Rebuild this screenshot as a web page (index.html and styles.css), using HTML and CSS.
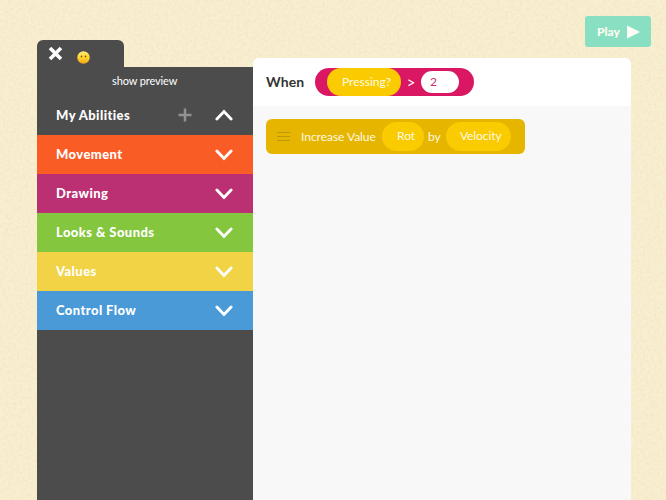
FILE: index.html
```html
<!DOCTYPE html>
<html lang="en">
<head>
<meta charset="utf-8">
<title>Ability editor</title>
<link rel="stylesheet" href="styles.css">
</head>
<body>
<svg class="paper" width="666" height="500" aria-hidden="true">
  <filter id="grain" x="0" y="0" width="100%" height="100%" color-interpolation-filters="sRGB">
    <feTurbulence type="fractalNoise" baseFrequency="0.35" numOctaves="2" seed="4"/>
    <feColorMatrix values="0 0 0 0 0.72  0 0 0 0 0.6  0 0 0 0 0.35  0.2 0 0 0 -0.085"/>
  </filter>
  <rect width="666" height="500" filter="url(#grain)"/>
</svg>
<button class="play"><span class="t-play">Play</span>
  <svg width="13" height="14" viewBox="0 0 13 14"><path d="M0 .5 13 7 0 13.5Z" fill="#fffdf3"/></svg>
</button>
<div class="editor">
  <aside class="sidebar">
    <div class="tab">
      <svg class="close" width="15" height="15" viewBox="0 0 15 15"><path d="M2 2 13 13M13 2 2 13" stroke="#fff" stroke-width="3.6"/></svg>
      <svg class="face" width="13" height="13" viewBox="0 0 13 13">
        <defs><linearGradient id="skin" x1="0" y1="0" x2="0" y2="1"><stop offset="0" stop-color="#ffe87c"/><stop offset=".5" stop-color="#ffd62c"/><stop offset="1" stop-color="#f3a319"/></linearGradient></defs>
        <circle cx="6.5" cy="6.5" r="6.2" fill="url(#skin)"/>
        <ellipse cx="4.5" cy="5.5" rx=".8" ry="1" fill="#7b4c10"/><ellipse cx="8.5" cy="5.5" rx=".8" ry="1" fill="#7b4c10"/>
      </svg>
    </div>
    <div class="panel">
      <div class="preview"><span class="t-preview">show preview</span></div>
      <div class="row abilities"><span class="t-abilities">My Abilities</span>
        <svg class="plus" width="14" height="14" viewBox="0 0 14 14"><path d="M7 .5V13.5M.5 7H13.5" stroke="#929292" stroke-width="2.5"/></svg>
        <svg class="chevron" width="18" height="12" viewBox="0 0 18 12"><path d="M1.9 10 9 2.6 16.1 10"/></svg>
      </div>
      <div class="row movement"><span class="t-movement">Movement</span><svg class="chevron" width="18" height="12" viewBox="0 0 18 12"><path d="M1.9 2 9 9.4 16.1 2"/></svg></div>
      <div class="row drawing"><span class="t-drawing">Drawing</span><svg class="chevron" width="18" height="12" viewBox="0 0 18 12"><path d="M1.9 2 9 9.4 16.1 2"/></svg></div>
      <div class="row looks"><span class="t-looks">Looks &amp; Sounds</span><svg class="chevron" width="18" height="12" viewBox="0 0 18 12"><path d="M1.9 2 9 9.4 16.1 2"/></svg></div>
      <div class="row values"><span class="t-values">Values</span><svg class="chevron" width="18" height="12" viewBox="0 0 18 12"><path d="M1.9 2 9 9.4 16.1 2"/></svg></div>
      <div class="row flow"><span class="t-flow">Control Flow</span><svg class="chevron" width="18" height="12" viewBox="0 0 18 12"><path d="M1.9 2 9 9.4 16.1 2"/></svg></div>
    </div>
  </aside>
  <main class="script">
    <header class="when">
      <span class="t-when">When</span>
      <div class="condition">
        <span class="pill pressing">Pressing?</span>
        <span class="operator">&gt;</span>
        <span class="number">2</span>
      </div>
    </header>
    <div class="block">
      <svg class="handle" width="13" height="9" viewBox="0 0 13 9"><path d="M0 .5H13M0 4.5H13M0 8.5H13" stroke="#bd9709"/></svg>
      <span class="t-increase">Increase Value</span>
      <span class="pill rot">Rot</span>
      <span class="t-by">by</span>
      <span class="pill velocity">Velocity</span>
    </div>
  </main>
</div>
</body>
</html>
```
FILE: styles.css
```css
* { box-sizing: border-box; }

body {
  margin: 0;
  width: 666px;
  height: 500px;
  overflow: hidden;
  position: relative;
  background: #f8eed0;
  font-family: Lato, "Liberation Sans", sans-serif;
  font-size: 12px;
  color: #fff;
}

svg { display: block; flex: none; }
span { white-space: nowrap; }

.paper { position: absolute; inset: 0; z-index: -1; }

.play {
  position: absolute;
  left: 585px;
  top: 16px;
  width: 66px;
  height: 31px;
  padding: 0 0 0 12px;
  border: 0;
  border-radius: 3px;
  background: #88dfc1;
  color: #fffdf3;
  display: flex;
  align-items: center;
  font: 900 12px Lato, sans-serif;
}
.play span { width: 30px; padding-bottom: 1px; text-align: left; }

.editor { display: flex; height: 500px; padding-left: 37px; }

.sidebar { width: 216px; padding-top: 40px; display: flex; flex-direction: column; }

.tab {
  width: 87px;
  height: 27px;
  border-radius: 6px 6px 0 0;
  background: #4c4c4c;
  display: flex;
  padding: 6px 0 0 11px;
}
.face { margin: 5px 0 0 14px; }

.panel { flex: 1; background: #4c4c4c; }
.preview { height: 29px; line-height: 28px; padding-left: 75px; font-size: 11px; letter-spacing: -.12px; }

.row {
  height: 39px;
  display: flex;
  align-items: center;
  padding: 0 20px 0 19px;
  font-size: 13px;
  font-weight: 900;
  letter-spacing: .42px;
}
.row span { padding-bottom: 2px; }
.abilities { padding-bottom: 1px; }
.abilities span { padding-bottom: 0; }
.chevron { margin-left: auto; }
.chevron path { fill: none; stroke: #fff; stroke-width: 2.9; stroke-linecap: round; }
.plus { margin-left: auto; }
.plus + .chevron { margin-left: 23px; }

.movement { background: #fa5c26; }
.drawing { background: #bb2f73; }
.looks { background: #84c63e; }
.values { background: #f2d345; }
.flow { background: #499ad7; }

.script {
  width: 378px;
  margin-top: 58px;
  border-radius: 6px 6px 0 0;
  background: #f8f8f8;
  overflow: hidden;
}

.when {
  height: 48px;
  background: #fff;
  display: flex;
  align-items: center;
  padding-left: 13px;
  color: #333;
}
.t-when { width: 49px; padding-bottom: 2px; font-size: 14px; font-weight: 700; letter-spacing: .1px; }

.condition {
  width: 159px;
  height: 28px;
  border-radius: 14px;
  background: #d91762;
  color: #fff;
  display: flex;
  align-items: center;
  padding-left: 12px;
}

.pill { height: 29px; line-height: 28px; border-radius: 15px; background: #f9cb00; color: #fffbe5; }
.pressing { width: 74px; height: 28px; padding-left: 15px; }
.operator { width: 20px; padding-bottom: 1px; text-align: center; font-size: 15px; }
.number {
  width: 38px;
  height: 22px;
  line-height: 22px;
  border-radius: 11px;
  background: #fff;
  color: #c6306b;
  padding-left: 9px;
}

.block {
  width: 259px;
  height: 35px;
  margin: 13px 0 0 13px;
  border-radius: 6px;
  background: #e6b500;
  color: #fff9e0;
  display: flex;
  align-items: center;
  padding-left: 11px;
}
.t-increase { margin-left: 11px; width: 81px; letter-spacing: -.04px; }
.rot { width: 42px; padding-left: 15px; }
.t-by { width: 22px; padding-left: 4px; }
.velocity { width: 65px; padding-left: 14px; letter-spacing: -.1px; }
```
